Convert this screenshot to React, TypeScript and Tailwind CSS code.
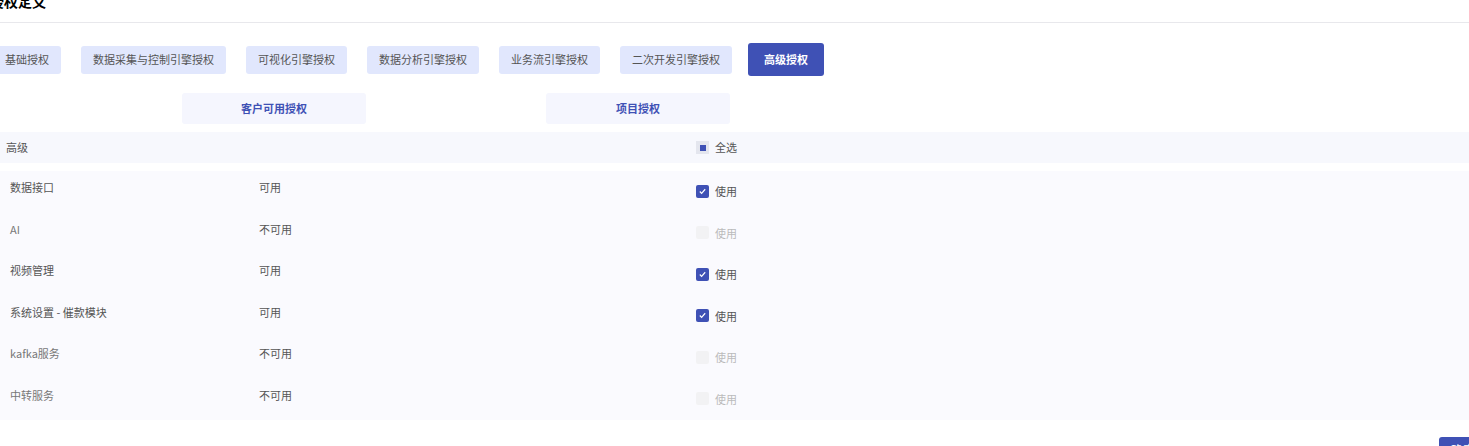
import React from "react";

const tabs = ["基础授权","数据采集与控制引擎授权","可视化引擎授权","数据分析引擎授权","业务流引擎授权","二次开发引擎授权"];
const rows: [string,boolean][] = [["数据接口",true],["AI",false],["视频管理",true],["系统设置 - 催款模块",true],["kafka服务",false],["中转服务",false]];

export default function App(){
  return (
    <div className="w-[1469px] h-[446px] overflow-hidden bg-white text-[11px]" style={{fontFamily:'"Noto Sans CJK SC","Noto Sans",sans-serif'}}>
      <div className="h-[35px] border-b border-[#e8e8ec] -mt-[12px] -ml-[10px] pt-[3px]">
        <div className="text-[14px] font-semibold text-black leading-[20px]">授权定义</div>
      </div>
      <div className="flex gap-[20px] items-center mt-[20px] -ml-[7px] h-[33px]">
        {tabs.map(t=>(<div key={t} className="h-[28px] px-[12px] flex items-center rounded-[3px] bg-[#e1e7fd] text-[#555] whitespace-nowrap">{t}</div>))}
        <div className="h-[33px] -ml-[4px] px-[16px] flex items-center rounded-[3px] bg-[#3f51b5] text-white font-semibold">高级授权</div>
      </div>
      <div className="flex mt-[17px] h-[31px]">
        <div className="ml-[182px] w-[184px] bg-[#f5f6fe] rounded-[3px] flex items-center justify-center text-[#3f51b5] font-semibold text-[11px]">客户可用授权</div>
        <div className="ml-[180px] w-[184px] bg-[#f5f6fe] rounded-[3px] flex items-center justify-center text-[#3f51b5] font-semibold text-[11px]">项目授权</div>
      </div>
      <div className="mt-[8px] h-[31px] bg-[#f7f8fd] flex items-center text-[#555] text-[11px]">
        <div className="w-[696px] pl-[6px]">高级</div>
        <div className="w-[13px] h-[13px] bg-[#e4e6ee] flex items-center justify-center"><div className="w-[6px] h-[6px] bg-[#3f51b5]"/></div>
        <span className="ml-[6px]">全选</span>
      </div>
      <div className="mt-[8px] bg-[#fafafe] h-[249px] flex flex-col justify-around">
        {rows.map(([n,ok])=>(
          <div key={n} className="flex items-start h-[41.5px] pt-[8px] text-[11px]">
            <div className={`w-[259px] pl-[10px] ${ok?"text-[#555]":"text-[#777]"}`}>{n}</div>
            <div className="w-[437px] text-[#555]">{ok?"可用":"不可用"}</div>
            <div className="flex items-center mt-[4px]">
              {ok ? (
                <div className="w-[13px] h-[13px] rounded-[2px] bg-[#3f51b5] flex items-center justify-center">
                  <svg width="9" height="9" viewBox="0 0 10 10"><path d="M2 5l2 2 4-4.5" stroke="white" strokeWidth="1.3" fill="none"/></svg>
                </div>
              ) : (<div className="w-[13px] h-[13px] rounded-[2px] bg-[#f2f2f4]"/>)}
              <span className={`ml-[6px] ${ok?"text-[#555]":"text-[#bbb]"}`}>使用</span>
            </div>
          </div>
        ))}
      </div>
      <div className="flex justify-end mt-[17px] -mr-[40px]">
        <div className="w-[70px] h-[30px] rounded-[3px] bg-[#3f51b5] text-white text-[12px] px-[12px] pt-[4px]">确定</div>
      </div>
    </div>
  );
}
